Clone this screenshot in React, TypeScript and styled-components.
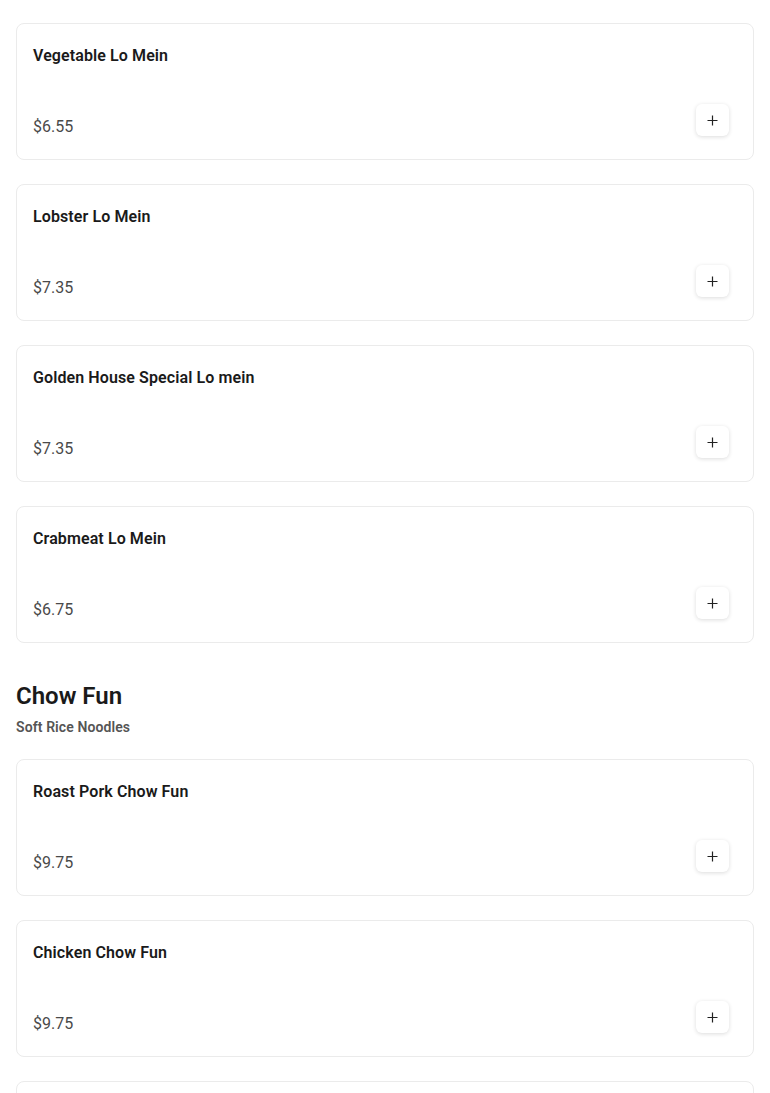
import React from 'react';
import styled, { createGlobalStyle } from 'styled-components';

const GlobalStyle = createGlobalStyle`
  * { box-sizing: border-box; }
  body {
    margin: 0;
    background: #ffffff;
    font-family: Roboto, "Liberation Sans", Arial, sans-serif;
    color: #1a1a1a;
  }
`;

const Page = styled.div`
  padding: 23px 16px 0 16px;
  display: flex;
  flex-direction: column;
`;

const Section = styled.section`
  display: flex;
  flex-direction: column;
  gap: 24px;
`;

const SectionHeader = styled.div`
  display: flex;
  flex-direction: column;
  gap: 5px;
  margin-top: 13px;
  margin-bottom: -2px;
`;

const SectionTitle = styled.h2`
  margin: 0;
  font-size: 24px;
  line-height: 32px;
  font-weight: 600;
  color: #1a1a1a;
`;

const SectionSubtitle = styled.p`
  margin: 0;
  font-size: 14px;
  line-height: 20px;
  font-weight: 600;
  letter-spacing: 0.1px;
  color: #555555;
`;

const Card = styled.div`
  height: 137px;
  border: 1px solid #ebebeb;
  border-radius: 8px;
  padding: 20px 24px 20px 16px;
  display: flex;
  flex-direction: column;
  justify-content: space-between;
  background: #fff;
`;

const ItemName = styled.h3`
  margin: 0;
  font-size: 16px;
  line-height: 24px;
  font-weight: 600;
  letter-spacing: 0.1px;
  color: #1a1a1a;
`;

const Row = styled.div`
  display: flex;
  justify-content: space-between;
  align-items: flex-end;
`;

const Price = styled.span`
  font-size: 16px;
  line-height: 24px;
  color: #4a4a4a;
`;

const AddButton = styled.button`
  width: 33px;
  height: 32px;
  margin-bottom: 3px;
  border: none;
  border-radius: 6px;
  background: #fff;
  box-shadow: 0 1px 4px rgba(0, 0, 0, 0.14);
  display: flex;
  align-items: center;
  justify-content: center;
  padding: 0;
  cursor: pointer;
`;

const PlusIcon = () => (
  <svg width="11" height="11" viewBox="0 0 11 11" fill="none">
    <path d="M5.5 0.5v10M0.5 5.5h10" stroke="#222" strokeWidth="1.2" />
  </svg>
);

type Item = { name: string; price: string };

const loMein: Item[] = [
  { name: 'Vegetable Lo Mein', price: '$6.55' },
  { name: 'Lobster Lo Mein', price: '$7.35' },
  { name: 'Golden House Special Lo mein', price: '$7.35' },
  { name: 'Crabmeat Lo Mein', price: '$6.75' },
];

const chowFun: Item[] = [
  { name: 'Roast Pork Chow Fun', price: '$9.75' },
  { name: 'Chicken Chow Fun', price: '$9.75' },
  { name: 'Beef Chow Fun', price: '$9.75' },
];

const MenuCard: React.FC<{ item: Item }> = ({ item }) => (
  <Card>
    <ItemName>{item.name}</ItemName>
    <Row>
      <Price>{item.price}</Price>
      <AddButton aria-label={`Add ${item.name}`}>
        <PlusIcon />
      </AddButton>
    </Row>
  </Card>
);

const App: React.FC = () => (
  <>
    <GlobalStyle />
    <Page>
      <Section>
        {loMein.map(item => (
          <MenuCard key={item.name} item={item} />
        ))}
        <SectionHeader>
          <SectionTitle>Chow Fun</SectionTitle>
          <SectionSubtitle>Soft Rice Noodles</SectionSubtitle>
        </SectionHeader>
        {chowFun.map(item => (
          <MenuCard key={item.name} item={item} />
        ))}
      </Section>
    </Page>
  </>
);

export default App;
